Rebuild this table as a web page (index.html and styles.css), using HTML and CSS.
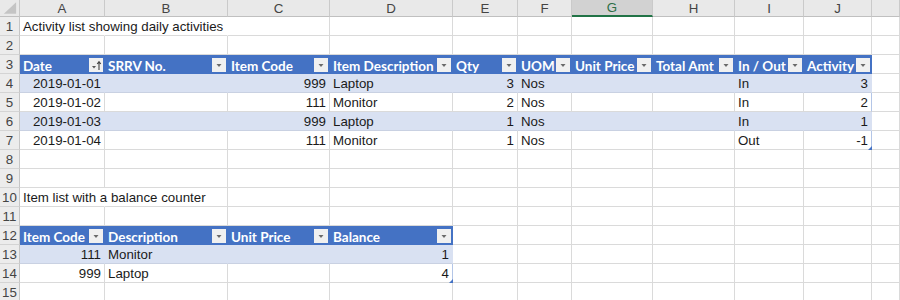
FILE: index.html
```html
<!DOCTYPE html>
<html>
<head>
<meta charset="utf-8">
<title>Activity list</title>
<link rel="stylesheet" href="styles.css">
</head>
<body>
<div class="sheet">
  <!-- column headers -->
  <div class="r">
    <div class="c corner"><svg width="20" height="17" viewBox="0 0 20 17"><polygon points="17,3 17,15 4,15" fill="#c4c4c4"/></svg></div>
    <div class="c ch">A</div><div class="c ch">B</div><div class="c ch">C</div><div class="c ch">D</div><div class="c ch">E</div>
    <div class="c ch">F</div><div class="c ch sel">G</div><div class="c ch">H</div><div class="c ch">I</div><div class="c ch">J</div><div class="c ch"></div>
  </div>
  <!-- 1 -->
  <div class="r">
    <div class="c rh">1</div>
    <div class="c ov">Activity list showing daily activities</div><div class="c ov"></div><div class="c"></div><div class="c"></div><div class="c"></div>
    <div class="c"></div><div class="c"></div><div class="c"></div><div class="c"></div><div class="c"></div><div class="c"></div>
  </div>
  <!-- 2 -->
  <div class="r">
    <div class="c rh">2</div>
    <div class="c"></div><div class="c"></div><div class="c"></div><div class="c"></div><div class="c"></div>
    <div class="c"></div><div class="c"></div><div class="c"></div><div class="c"></div><div class="c"></div><div class="c"></div>
  </div>
  <!-- 3 table header -->
  <div class="r">
    <div class="c rh">3</div>
    <div class="c th"><span class="t">Date</span><span class="dd"><svg width="14" height="14" viewBox="0 0 14 14"><polygon points="3,8 7,8 5,10.5" fill="#555"/><path d="M10 12V4M8.2 6L10 3.6L11.8 6" fill="none" stroke="#444" stroke-width="1.1"/></svg></span></div>
    <div class="c th"><span class="t">SRRV No.</span><span class="dd"><svg width="14" height="14" viewBox="0 0 14 14"><polygon points="4.5,6 9.5,6 7,9" fill="#6a6a6a"/></svg></span></div>
    <div class="c th"><span class="t">Item Code</span><span class="dd"><svg width="14" height="14" viewBox="0 0 14 14"><polygon points="4.5,6 9.5,6 7,9" fill="#6a6a6a"/></svg></span></div>
    <div class="c th"><span class="t">Item Description</span><span class="dd"><svg width="14" height="14" viewBox="0 0 14 14"><polygon points="4.5,6 9.5,6 7,9" fill="#6a6a6a"/></svg></span></div>
    <div class="c th"><span class="t">Qty</span><span class="dd"><svg width="14" height="14" viewBox="0 0 14 14"><polygon points="4.5,6 9.5,6 7,9" fill="#6a6a6a"/></svg></span></div>
    <div class="c th"><span class="t">UOM</span><span class="dd"><svg width="14" height="14" viewBox="0 0 14 14"><polygon points="4.5,6 9.5,6 7,9" fill="#6a6a6a"/></svg></span></div>
    <div class="c th"><span class="t">Unit Price</span><span class="dd"><svg width="14" height="14" viewBox="0 0 14 14"><polygon points="4.5,6 9.5,6 7,9" fill="#6a6a6a"/></svg></span></div>
    <div class="c th"><span class="t">Total Amt</span><span class="dd"><svg width="14" height="14" viewBox="0 0 14 14"><polygon points="4.5,6 9.5,6 7,9" fill="#6a6a6a"/></svg></span></div>
    <div class="c th"><span class="t">In / Out</span><span class="dd"><svg width="14" height="14" viewBox="0 0 14 14"><polygon points="4.5,6 9.5,6 7,9" fill="#6a6a6a"/></svg></span></div>
    <div class="c th"><span class="t">Activity</span><span class="dd"><svg width="14" height="14" viewBox="0 0 14 14"><polygon points="4.5,6 9.5,6 7,9" fill="#6a6a6a"/></svg></span></div>
    <div class="c"></div>
  </div>
  <!-- 4 -->
  <div class="r band">
    <div class="c rh">4</div>
    <div class="c n">2019-01-01</div><div class="c"></div><div class="c n">999</div><div class="c">Laptop</div><div class="c n">3</div>
    <div class="c">Nos</div><div class="c"></div><div class="c"></div><div class="c">In</div><div class="c n last">3</div><div class="c out"></div>
  </div>
  <!-- 5 -->
  <div class="r">
    <div class="c rh">5</div>
    <div class="c n">2019-01-02</div><div class="c"></div><div class="c n">111</div><div class="c">Monitor</div><div class="c n">2</div>
    <div class="c">Nos</div><div class="c"></div><div class="c"></div><div class="c">In</div><div class="c n last">2</div><div class="c"></div>
  </div>
  <!-- 6 -->
  <div class="r band">
    <div class="c rh">6</div>
    <div class="c n">2019-01-03</div><div class="c"></div><div class="c n">999</div><div class="c">Laptop</div><div class="c n">1</div>
    <div class="c">Nos</div><div class="c"></div><div class="c"></div><div class="c">In</div><div class="c n last">1</div><div class="c out"></div>
  </div>
  <!-- 7 -->
  <div class="r">
    <div class="c rh">7</div>
    <div class="c n">2019-01-04</div><div class="c"></div><div class="c n">111</div><div class="c">Monitor</div><div class="c n">1</div>
    <div class="c">Nos</div><div class="c"></div><div class="c"></div><div class="c">Out</div><div class="c n last grip">-1</div><div class="c"></div>
  </div>
  <!-- 8 -->
  <div class="r">
    <div class="c rh">8</div>
    <div class="c"></div><div class="c"></div><div class="c"></div><div class="c"></div><div class="c"></div>
    <div class="c"></div><div class="c"></div><div class="c"></div><div class="c"></div><div class="c"></div><div class="c"></div>
  </div>
  <!-- 9 -->
  <div class="r">
    <div class="c rh">9</div>
    <div class="c"></div><div class="c"></div><div class="c"></div><div class="c"></div><div class="c"></div>
    <div class="c"></div><div class="c"></div><div class="c"></div><div class="c"></div><div class="c"></div><div class="c"></div>
  </div>
  <!-- 10 -->
  <div class="r">
    <div class="c rh">10</div>
    <div class="c ov">Item list with a balance counter</div><div class="c"></div><div class="c"></div><div class="c"></div><div class="c"></div>
    <div class="c"></div><div class="c"></div><div class="c"></div><div class="c"></div><div class="c"></div><div class="c"></div>
  </div>
  <!-- 11 -->
  <div class="r">
    <div class="c rh">11</div>
    <div class="c"></div><div class="c"></div><div class="c"></div><div class="c"></div><div class="c"></div>
    <div class="c"></div><div class="c"></div><div class="c"></div><div class="c"></div><div class="c"></div><div class="c"></div>
  </div>
  <!-- 12 table header -->
  <div class="r">
    <div class="c rh">12</div>
    <div class="c th"><span class="t">Item Code</span><span class="dd"><svg width="14" height="14" viewBox="0 0 14 14"><polygon points="4.5,6 9.5,6 7,9" fill="#6a6a6a"/></svg></span></div>
    <div class="c th"><span class="t">Description</span><span class="dd"><svg width="14" height="14" viewBox="0 0 14 14"><polygon points="4.5,6 9.5,6 7,9" fill="#6a6a6a"/></svg></span></div>
    <div class="c th"><span class="t">Unit Price</span><span class="dd"><svg width="14" height="14" viewBox="0 0 14 14"><polygon points="4.5,6 9.5,6 7,9" fill="#6a6a6a"/></svg></span></div>
    <div class="c th"><span class="t">Balance</span><span class="dd"><svg width="14" height="14" viewBox="0 0 14 14"><polygon points="4.5,6 9.5,6 7,9" fill="#6a6a6a"/></svg></span></div>
    <div class="c"></div>
    <div class="c"></div><div class="c"></div><div class="c"></div><div class="c"></div><div class="c"></div><div class="c"></div>
  </div>
  <!-- 13 -->
  <div class="r band">
    <div class="c rh">13</div>
    <div class="c n">111</div><div class="c">Monitor</div><div class="c"></div><div class="c n last">1</div><div class="c out"></div>
    <div class="c out"></div><div class="c out"></div><div class="c out"></div><div class="c out"></div><div class="c out"></div><div class="c out"></div>
  </div>
  <!-- 14 -->
  <div class="r">
    <div class="c rh">14</div>
    <div class="c n">999</div><div class="c">Laptop</div><div class="c"></div><div class="c n last grip">4</div><div class="c"></div>
    <div class="c"></div><div class="c"></div><div class="c"></div><div class="c"></div><div class="c"></div><div class="c"></div>
  </div>
  <!-- 15 -->
  <div class="r">
    <div class="c rh">15</div>
    <div class="c"></div><div class="c"></div><div class="c"></div><div class="c"></div><div class="c"></div>
    <div class="c"></div><div class="c"></div><div class="c"></div><div class="c"></div><div class="c"></div><div class="c"></div>
  </div>
</div>
</body>
</html>
```

FILE: styles.css
```css
html, body {
  margin: 0;
  padding: 0;
  background: #ffffff;
}

body {
  font-family: "Liberation Sans", Arial, sans-serif;
  font-size: 13.3px;
  color: #1a1a1a;
  overflow: hidden;
  height: 300px;
}

.sheet {
  display: grid;
  grid-template-columns: 20px 85px 123px 102px 123px 65px 54px 81px 82px 69px 68px 1fr;
  grid-template-rows: 17px repeat(15, 19px);
  width: 900px;
}

.r {
  display: contents;
}

.c {
  box-sizing: border-box;
  border-right: 1px solid #dadada;
  border-bottom: 1px solid #dadada;
  padding: 0 3px;
  white-space: nowrap;
  display: flex;
  align-items: flex-end;
  line-height: 16px;
  min-width: 0;
  overflow: visible;
  position: relative;
}

.corner {
  background: #e9e9e9;
  padding: 0;
  border-right: 1px solid #c8c8c8;
  border-bottom: 1px solid #c0c0c0;
}

.corner svg {
  display: block;
}

.ch {
  background: #e9e9e9;
  color: #444444;
  justify-content: center;
  align-items: center;
  font-size: 13.3px;
  padding-top: 1px;
  border-right: 1px solid #cacaca;
  border-bottom: 1px solid #c0c0c0;
}

.ch.sel {
  background: #d2d2d2;
  color: #2c6e46;
  border-bottom: 2px solid #217346;
}

.rh {
  background: #ececec;
  color: #444444;
  justify-content: center;
  padding: 0;
  border-right: 1px solid #c6c6c6;
  border-bottom: 1px solid #d4d4d4;
}

.ov {
  border-right-color: transparent;
}

.n {
  justify-content: flex-end;
}

.th {
  background: #4472c4;
  color: #ffffff;
  font-family: Lato, "Liberation Sans", sans-serif;
  font-weight: bold;
  font-size: 13.5px;
  line-height: 16px;
  border-right-color: #4472c4;
  border-bottom-color: #4472c4;
  padding-right: 1px;
  padding-bottom: 0;
}

.th .t {
  flex: 1 1 auto;
  min-width: 0;
  position: relative;
  top: 1px;
}

.dd {
  width: 14px;
  height: 14px;
  flex-shrink: 0;
  margin-left: 2px;
  background: #f0f0f0;
  display: flex;
  align-self: center;
  position: relative;
  top: 1px;
}

.dd svg {
  display: block;
}

.band > .c:not(.rh):not(.out) {
  background: #d9e1f2;
  border-right-color: #d9e1f2;
  border-bottom-color: #c9d1e2;
}

.c.last {
  border-right-color: #b4c6e7;
}

.band > .c.last {
  border-right-color: #b4c6e7;
}

.grip::after {
  content: "";
  position: absolute;
  right: -1px;
  bottom: -1px;
  width: 0;
  height: 0;
  border-left: 4px solid transparent;
  border-bottom: 4px solid #4472c4;
}
```
